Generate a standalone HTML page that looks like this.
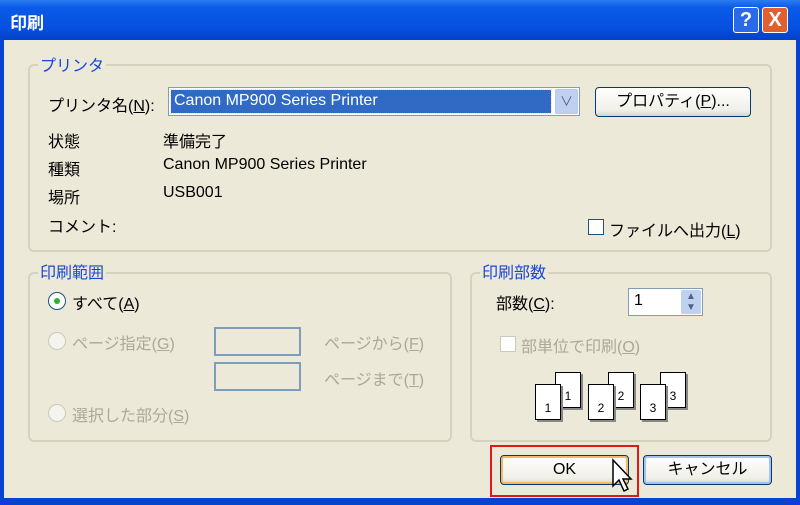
<!DOCTYPE html>
<html><head><meta charset="utf-8"><style>
*{margin:0;padding:0;box-sizing:border-box}
body{width:800px;height:505px;overflow:hidden;background:#0842d0;font-family:"Liberation Sans","Noto Sans CJK JP",sans-serif;font-size:16px;color:#000;position:relative}
.a{position:absolute;white-space:nowrap}
#tb{left:0;top:0;width:800px;height:40px;background:linear-gradient(#2a7cf0,#0a5ae8 20%,#0650e0 70%,#0440c8)}
#bd{left:4px;top:40px;width:792px;height:458px;background:#ece9d8}
.g{position:absolute;border:2px solid #d6d2c0;border-radius:6px}
.lg{position:absolute;color:#1747d8;background:#ece9d8;padding:0 2px;font-size:16px}
.btn{position:absolute;border:1px solid #003c74;border-radius:4px;background:linear-gradient(#fff,#f0efe8 80%,#d8d4c8);text-align:center;font-size:16px}
.dis{color:#aca899}
.box{position:absolute;border:2px solid #7f9db9;background:#ece9d8}
.pg{position:absolute;width:26px;height:36px;background:#fff;border:1px solid #000;box-shadow:2px 2px 0 #888;font-size:12px;text-align:center;padding-top:16px}
</style></head><body>
<div class="a" id="tb"></div>
<div class="a" style="left:10px;top:9px;color:#fff;font-weight:bold;font-size:17px">印刷</div>
<div class="a" style="left:733px;top:7px;width:26px;height:26px;border:1px solid #fff;border-radius:3px;background:#2a6ae8;color:#fff;font-weight:bold;text-align:center;font-size:20px;line-height:24px">?</div>
<div class="a" style="left:762px;top:7px;width:26px;height:26px;border:1px solid #fff;border-radius:3px;background:#e06030;color:#fff;font-weight:bold;text-align:center;font-size:20px;line-height:24px">X</div>
<div class="a" id="bd"></div>

<div class="g" style="left:28px;top:64px;width:744px;height:188px"></div>
<div class="lg" style="left:38px;top:52px">プリンタ</div>
<div class="a" style="left:48px;top:92px">プリンタ名(<u>N</u>):</div>
<div class="a" style="left:168px;top:87px;width:412px;height:29px;border:1px solid #7f9db9;background:#fff"></div>
<div class="a" style="left:171px;top:90px;width:380px;height:23px;background:#316ac5;color:#fff;padding:2px 3px;outline:1px dotted #ff0">Canon MP900 Series Printer</div>
<div class="a" style="left:555px;top:89px;width:23px;height:25px;background:#c0d0f0;border:1px solid #b8c8e8;border-radius:2px;color:#4d6185;text-align:center;font-size:13px;line-height:24px">&#8744;</div>
<div class="btn" style="left:595px;top:87px;width:156px;height:30px;line-height:28px">プロパティ(<u>P</u>)...</div>
<div class="a" style="left:48px;top:128px">状態</div><div class="a" style="left:163px;top:128px">準備完了</div>
<div class="a" style="left:48px;top:156px">種類</div><div class="a" style="left:163px;top:156px">Canon MP900 Series Printer</div>
<div class="a" style="left:48px;top:184px">場所</div><div class="a" style="left:163px;top:184px">USB001</div>
<div class="a" style="left:48px;top:213px">コメント:</div>
<div class="a" style="left:588px;top:219px;width:16px;height:16px;border:1px solid #1c5180;background:#fff"></div>
<div class="a" style="left:609px;top:217px">ファイルへ出力(<u>L</u>)</div>

<div class="g" style="left:28px;top:272px;width:424px;height:170px"></div>
<div class="lg" style="left:38px;top:259px">印刷範囲</div>
<div class="a" style="left:48px;top:292px;width:18px;height:18px;border:1px solid #1c5180;border-radius:50%;background:#fff"></div>
<div class="a" style="left:54px;top:298px;width:6px;height:6px;border-radius:50%;background:#30b030"></div>
<div class="a" style="left:72px;top:290px">すべて(<u>A</u>)</div>
<div class="a" style="left:48px;top:332px;width:18px;height:18px;border:1px solid #ccc9b8;border-radius:50%;background:#f4f3ee"></div>
<div class="a dis" style="left:72px;top:330px">ページ指定(<u>G</u>)</div>
<div class="box" style="left:214px;top:327px;width:87px;height:29px"></div>
<div class="box" style="left:214px;top:362px;width:87px;height:29px"></div>
<div class="a dis" style="left:324px;top:330px">ページから(<u>F</u>)</div>
<div class="a dis" style="left:324px;top:366px">ページまで(<u>T</u>)</div>
<div class="a" style="left:48px;top:404px;width:18px;height:18px;border:1px solid #ccc9b8;border-radius:50%;background:#f4f3ee"></div>
<div class="a dis" style="left:72px;top:402px">選択した部分(<u>S</u>)</div>

<div class="g" style="left:470px;top:272px;width:302px;height:170px"></div>
<div class="lg" style="left:480px;top:259px">印刷部数</div>
<div class="a" style="left:496px;top:290px">部数(<u>C</u>):</div>
<div class="a" style="left:628px;top:288px;width:75px;height:28px;border:1px solid #7f9db9;background:#fff;padding:3px 5px">1</div>
<div class="a" style="left:681px;top:290px;width:20px;height:24px;background:#c0d0f0;border-radius:2px;color:#4d6185;font-size:10px;text-align:center;line-height:11px;padding-top:1px">&#9650;<br>&#9660;</div>
<div class="a" style="left:500px;top:336px;width:16px;height:16px;border:1px solid #ccc9b8;background:#fff"></div>
<div class="a dis" style="left:521px;top:333px">部単位で印刷(<u>O</u>)</div>
<div class="pg" style="left:555px;top:372px">1</div><div class="pg" style="left:535px;top:384px">1</div>
<div class="pg" style="left:608px;top:372px">2</div><div class="pg" style="left:588px;top:384px">2</div>
<div class="pg" style="left:660px;top:372px">3</div><div class="pg" style="left:640px;top:384px">3</div>

<div class="a" style="left:490px;top:445px;width:149px;height:52px;border:2px solid #e01818"></div>
<div class="btn" style="left:500px;top:455px;width:129px;height:30px;line-height:28px;box-shadow:inset 0 0 0 2px #f8b860">OK</div>
<div class="btn" style="left:643px;top:455px;width:129px;height:30px;line-height:28px;box-shadow:inset 0 0 0 2px #a8c0f0">キャンセル</div>
<svg class="a" style="left:610px;top:458px" width="24" height="40" viewBox="0 0 24 40"><path d="M3 2 L3 28 L9 22 L14 33 L18 31 L13 21 L21 21 Z" fill="#fff" stroke="#000" stroke-width="1.5"/></svg>
</body></html>
